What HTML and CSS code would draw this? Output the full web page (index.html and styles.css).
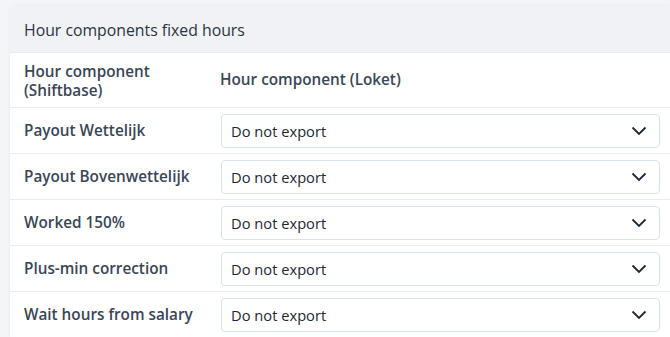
FILE: index.html
```html
<!DOCTYPE html>
<html lang="en">
<head>
  <meta charset="UTF-8">
  <title>Hour components fixed hours</title>
  <link rel="stylesheet" href="styles.css">
</head>
<body>
  <main class="page">
    <section class="card">
      <header class="card-header">Hour components fixed hours</header>
      <div class="row row-head">
        <div class="col-label">Hour component<br>(Shiftbase)</div>
        <div class="col-field">Hour component (Loket)</div>
      </div>
      <div class="row">
        <div class="col-label">Payout Wettelijk</div>
        <div class="col-field">
          <div class="select"><span>Do not export</span>
            <svg class="chevron" viewBox="0 0 16 10" width="16" height="10"><path d="M1.5 1.5 L8 8 L14.5 1.5" fill="none" stroke="#1f2733" stroke-width="1.8"/></svg>
          </div>
        </div>
      </div>
      <div class="row">
        <div class="col-label">Payout Bovenwettelijk</div>
        <div class="col-field">
          <div class="select"><span>Do not export</span>
            <svg class="chevron" viewBox="0 0 16 10" width="16" height="10"><path d="M1.5 1.5 L8 8 L14.5 1.5" fill="none" stroke="#1f2733" stroke-width="1.8"/></svg>
          </div>
        </div>
      </div>
      <div class="row">
        <div class="col-label">Worked 150%</div>
        <div class="col-field">
          <div class="select"><span>Do not export</span>
            <svg class="chevron" viewBox="0 0 16 10" width="16" height="10"><path d="M1.5 1.5 L8 8 L14.5 1.5" fill="none" stroke="#1f2733" stroke-width="1.8"/></svg>
          </div>
        </div>
      </div>
      <div class="row">
        <div class="col-label">Plus-min correction</div>
        <div class="col-field">
          <div class="select"><span>Do not export</span>
            <svg class="chevron" viewBox="0 0 16 10" width="16" height="10"><path d="M1.5 1.5 L8 8 L14.5 1.5" fill="none" stroke="#1f2733" stroke-width="1.8"/></svg>
          </div>
        </div>
      </div>
      <div class="row">
        <div class="col-label">Wait hours from salary</div>
        <div class="col-field">
          <div class="select"><span>Do not export</span>
            <svg class="chevron" viewBox="0 0 16 10" width="16" height="10"><path d="M1.5 1.5 L8 8 L14.5 1.5" fill="none" stroke="#1f2733" stroke-width="1.8"/></svg>
          </div>
        </div>
      </div>
    </section>
  </main>
</body>
</html>
```

FILE: styles.css
```css
html, body {
  margin: 0;
  background: #f4f5f7;
  font-family: "Open Sans", "Noto Sans", Arial, sans-serif;
  color: #34404f;
}
.page {
  padding: 5px 0 0 10px;
}
.card {
  background: #fff;
  border-radius: 4px 0 0 0;
  box-shadow: 0 0 3px rgba(0,0,0,0.06);
  overflow: hidden;
}
.card-header {
  height: 48px;
  box-sizing: border-box;
  padding: 14px 14px 0 14px;
  background: #f0f2f6;
  border-bottom: 1px solid #e6e9ee;
  font-size: 15.8px;
  color: #2b3441;
}
.row {
  display: flex;
  align-items: center;
  height: 46px;
  box-sizing: border-box;
  border-bottom: 1px solid #e8ebf0;
  padding: 0 10px 0 14px;
}
.row-head {
  height: 55px;
  padding-top: 2px;
}
.col-label {
  width: 196px;
  flex: none;
  font-size: 15.3px;
  font-weight: 600;
  line-height: 19px;
  color: #3a4656;
}
.row-head .col-field {
  font-size: 15.3px;
  font-weight: 600;
  color: #3a4656;
  margin-top: -4px;
}
.col-field {
  flex: 1;
}
.select {
  display: flex;
  align-items: center;
  justify-content: space-between;
  height: 34px;
  box-sizing: border-box;
  border: 1px solid #d9e2ee;
  border-radius: 4px;
  padding: 0 12px 0 9px;
  font-size: 14.7px;
  color: #1f2733;
  margin-left: 1px;
}
.chevron {
  display: block;
}
```
